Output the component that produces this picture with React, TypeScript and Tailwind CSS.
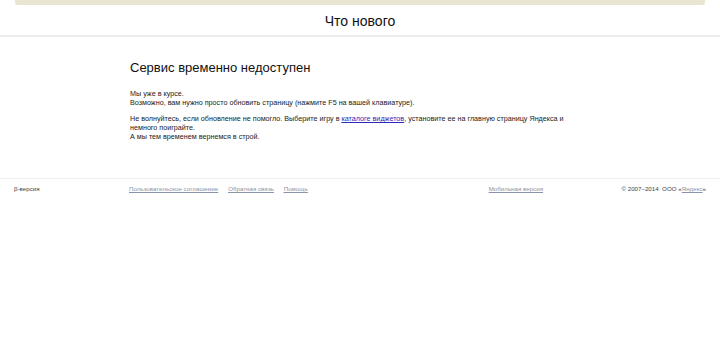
import React from "react";

export default function App() {
  return (
    <div className="w-[720px] h-[340px] bg-white overflow-hidden" style={{ fontFamily: '"Liberation Sans", Arial, sans-serif' }}>
      <div className="px-[15px]">
        <div className="h-[5px] bg-[#e8e5d1] rounded-b-[3px]" />
      </div>
      <div className="h-[32px] flex items-center justify-center text-[14px] text-[#111] border-b-2 border-[#ececec] leading-none pt-[1px]">
        Что нового
      </div>
      <div className="w-[460px] mx-auto pt-[23px] h-[141px]">
        <h1 className="text-[13px] leading-[16px] text-[#111] font-normal">Сервис временно недоступен</h1>
        <div className="mt-[13px] text-[7.2px] leading-[9px] text-[#222]">
          <p>Мы уже в курсе.</p>
          <p>Возможно, вам нужно просто обновить страницу (нажмите F5 на вашей клавиатуре).</p>
          <p className="mt-[7px]">
            Не волнуйтесь, если обновление не помогло. Выберите игру в{" "}
            <a className="text-[#2b2bb8] underline">каталоге виджетов</a>, установите ее на главную страницу Яндекса и
            <br />
            немного поиграйте.
          </p>
          <p>А мы тем временем вернемся в строй.</p>
        </div>
      </div>
      <div className="border-t border-[#f0f0f0] h-[20px] flex items-center text-[6.2px] text-[#444] px-[14px]">
        <div className="w-[115px]">β-версия</div>
        <div className="flex gap-[10px] text-[#8a94a8] underline">
          <a>Пользовательское соглашение</a>
          <a>Обратная связь</a>
          <a>Помощь</a>
        </div>
        <div className="ml-[181px] text-[#8a94a8] underline">Мобильная версия</div>
        <div className="ml-auto whitespace-pre">
          © 2007–2014  ООО «<a className="text-[#8a94a8] underline">Яндекс</a>»
        </div>
      </div>
    </div>
  );
}
